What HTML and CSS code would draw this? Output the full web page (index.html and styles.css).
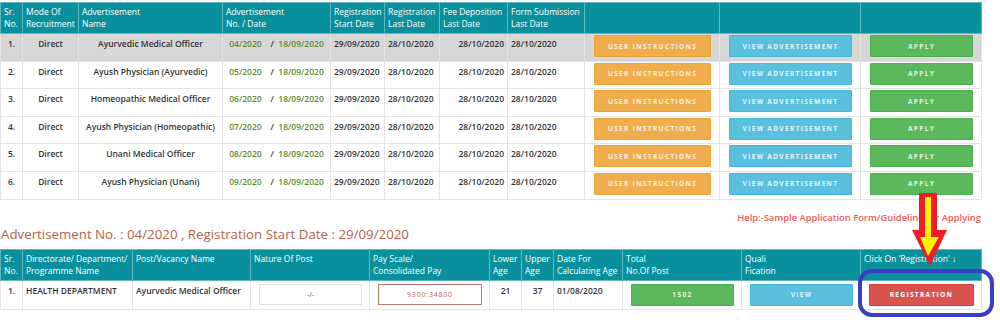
FILE: index.html
```html
<!DOCTYPE html>
<html lang="en">
<head>
    <meta charset="UTF-8">
    <meta name="viewport" content="width=device-width, initial-scale=1.0">
    <title>Advertisements</title>
    <link rel="stylesheet" href="styles.css">
</head>
<body>
    <div class="page">
        <table class="grid">
            <colgroup>
                <col style="width:22px"><col style="width:56px"><col style="width:144px"><col style="width:108px">
                <col style="width:54px"><col style="width:55px"><col style="width:68px"><col style="width:77px">
                <col style="width:135px"><col style="width:141px"><col style="width:121px">
            </colgroup>
            <thead>
                <tr>
                    <th>Sr.<br>No.</th>
                    <th>Mode Of<br>Recruitment</th>
                    <th>Advertisement<br>Name</th>
                    <th>Advertisement<br>No. / Date</th>
                    <th>Registration<br>Start Date</th>
                    <th>Registration<br>Last Date</th>
                    <th>Fee Deposition<br>Last Date</th>
                    <th>Form Submission<br>Last Date</th>
                    <th></th>
                    <th></th>
                    <th></th>
                </tr>
            </thead>
            <tbody>
                <tr class="active">
                    <td class="center">1.</td>
                    <td class="center">Direct</td>
                    <td class="center">Ayurvedic Medical Officer</td>
                    <td class="center"><span class="adv-no">04/2020</span>&nbsp;&nbsp;&nbsp; / &nbsp;<span class="adv-no">18/09/2020</span></td>
                    <td>29/09/2020</td>
                    <td>28/10/2020</td>
                    <td class="right">28/10/2020</td>
                    <td>28/10/2020</td>
                    <td class="action"><button class="btn btn-orange">User Instructions</button></td>
                    <td class="action"><button class="btn btn-blue">View Advertisement</button></td>
                    <td class="action"><button class="btn btn-green">Apply</button></td>
                </tr>
                <tr>
                    <td class="center">2.</td>
                    <td class="center">Direct</td>
                    <td class="center">Ayush Physician (Ayurvedic)</td>
                    <td class="center"><span class="adv-no">05/2020</span>&nbsp;&nbsp;&nbsp; / &nbsp;<span class="adv-no">18/09/2020</span></td>
                    <td>29/09/2020</td>
                    <td>28/10/2020</td>
                    <td class="right">28/10/2020</td>
                    <td>28/10/2020</td>
                    <td class="action"><button class="btn btn-orange">User Instructions</button></td>
                    <td class="action"><button class="btn btn-blue">View Advertisement</button></td>
                    <td class="action"><button class="btn btn-green">Apply</button></td>
                </tr>
                <tr>
                    <td class="center">3.</td>
                    <td class="center">Direct</td>
                    <td class="center">Homeopathic Medical Officer</td>
                    <td class="center"><span class="adv-no">06/2020</span>&nbsp;&nbsp;&nbsp; / &nbsp;<span class="adv-no">18/09/2020</span></td>
                    <td>29/09/2020</td>
                    <td>28/10/2020</td>
                    <td class="right">28/10/2020</td>
                    <td>28/10/2020</td>
                    <td class="action"><button class="btn btn-orange">User Instructions</button></td>
                    <td class="action"><button class="btn btn-blue">View Advertisement</button></td>
                    <td class="action"><button class="btn btn-green">Apply</button></td>
                </tr>
                <tr>
                    <td class="center">4.</td>
                    <td class="center">Direct</td>
                    <td class="center">Ayush Physician (Homeopathic)</td>
                    <td class="center"><span class="adv-no">07/2020</span>&nbsp;&nbsp;&nbsp; / &nbsp;<span class="adv-no">18/09/2020</span></td>
                    <td>29/09/2020</td>
                    <td>28/10/2020</td>
                    <td class="right">28/10/2020</td>
                    <td>28/10/2020</td>
                    <td class="action"><button class="btn btn-orange">User Instructions</button></td>
                    <td class="action"><button class="btn btn-blue">View Advertisement</button></td>
                    <td class="action"><button class="btn btn-green">Apply</button></td>
                </tr>
                <tr>
                    <td class="center">5.</td>
                    <td class="center">Direct</td>
                    <td class="center">Unani Medical Officer</td>
                    <td class="center"><span class="adv-no">08/2020</span>&nbsp;&nbsp;&nbsp; / &nbsp;<span class="adv-no">18/09/2020</span></td>
                    <td>29/09/2020</td>
                    <td>28/10/2020</td>
                    <td class="right">28/10/2020</td>
                    <td>28/10/2020</td>
                    <td class="action"><button class="btn btn-orange">User Instructions</button></td>
                    <td class="action"><button class="btn btn-blue">View Advertisement</button></td>
                    <td class="action"><button class="btn btn-green">Apply</button></td>
                </tr>
                <tr>
                    <td class="center">6.</td>
                    <td class="center">Direct</td>
                    <td class="center">Ayush Physician (Unani)</td>
                    <td class="center"><span class="adv-no">09/2020</span>&nbsp;&nbsp;&nbsp; / &nbsp;<span class="adv-no">18/09/2020</span></td>
                    <td>29/09/2020</td>
                    <td>28/10/2020</td>
                    <td class="right">28/10/2020</td>
                    <td>28/10/2020</td>
                    <td class="action"><button class="btn btn-orange">User Instructions</button></td>
                    <td class="action"><button class="btn btn-blue">View Advertisement</button></td>
                    <td class="action"><button class="btn btn-green">Apply</button></td>
                </tr>
            </tbody>
        </table>

        <p class="help">Help:-Sample Application Form/Guideline for Applying</p>
        <h2 class="title">Advertisement No. : 04/2020 , Registration Start Date : 29/09/2020</h2>

        <table class="grid posts">
            <colgroup>
                <col style="width:22px"><col style="width:110px"><col style="width:118px"><col style="width:119px">
                <col style="width:120px"><col style="width:32px"><col style="width:32px"><col style="width:69px">
                <col style="width:119px"><col style="width:119px"><col style="width:121px">
            </colgroup>
            <thead>
                <tr>
                    <th>Sr.<br>No.</th>
                    <th>Directorate/ Department/<br>Programme Name</th>
                    <th>Post/Vacancy Name</th>
                    <th>Nature Of Post</th>
                    <th>Pay Scale/<br>Consolidated Pay</th>
                    <th>Lower<br>Age</th>
                    <th>Upper<br>Age</th>
                    <th>Date For<br>Calculating Age</th>
                    <th>Total<br>No.Of Post</th>
                    <th>Quali<br>Fication</th>
                    <th>Click On 'Registration' &darr;</th>
                </tr>
            </thead>
            <tbody>
                <tr>
                    <td class="center">1.</td>
                    <td>HEALTH DEPARTMENT</td>
                    <td>Ayurvedic Medical Officer</td>
                    <td class="box-cell"><div class="box">-/-</div></td>
                    <td class="box-cell"><div class="box box-pay">9300:34800</div></td>
                    <td class="center">21</td>
                    <td class="center">37</td>
                    <td>01/08/2020</td>
                    <td class="box-cell"><button class="btn btn-green">1502</button></td>
                    <td class="box-cell"><button class="btn btn-blue">View</button></td>
                    <td class="box-cell"><button class="btn btn-red">Registration</button></td>
                </tr>
            </tbody>
        </table>

        <div class="footer-bar"></div>

        <svg class="callout" width="1000" height="325" viewBox="0 0 1000 325">
            <polygon points="919,193 937,193 937,230 947,230 930,266 912,230 919,230" fill="#ee1c24"/>
            <polygon points="925,197 931,197 931,237 939,237 928,256 920,237 925,237" fill="#fff200"/>
            <rect x="860" y="271" width="132" height="44" rx="12" ry="12" fill="none" stroke="#3b3dc4" stroke-width="4"/>
        </svg>
    </div>
</body>
</html>
```

FILE: styles.css
```css
* {
    margin: 0;
    padding: 0;
    box-sizing: border-box;
}
body {
    font-family: 'Open Sans', sans-serif;
    background: #fff;
    color: #333;
}
.page {
    position: relative;
    width: 1000px;
    height: 325px;
    padding-top: 2px;
    overflow: hidden;
}
.grid {
    width: 981px;
    table-layout: fixed;
    border-collapse: collapse;
    font-size: 8.5px;
}
.grid th {
    background: #0a8f9c;
    color: #fff;
    font-weight: 400;
    text-align: left;
    vertical-align: top;
    line-height: 12px;
    padding: 3px 3px;
    border: 1px solid #5fb6bf;
    height: 29px;
}
.grid td {
    font-weight: 600;
    line-height: 12px;
    padding: 4px 3px 3px;
    border: 1px solid #e4e4e4;
    vertical-align: top;
    height: 27.6px;
    white-space: nowrap;
}
.grid tr.active td {
    background: #d7d7d7;
}
.grid td.center {
    text-align: center;
}
.grid td.right {
    text-align: right;
}
.adv-no {
    color: #5e8a2c;
}
.grid td.action {
    padding: 1px 8px 3px 9px;
}
.btn {
    display: block;
    width: 100%;
    height: 22px;
    border: 1px solid transparent;
    border-radius: 1px;
    color: rgba(255, 255, 255, 0.85);
    font-family: 'Open Sans', sans-serif;
    font-size: 6.6px;
    font-weight: 700;
    letter-spacing: 1.3px;
    text-transform: uppercase;
    cursor: pointer;
}
.btn-orange {
    background: #f0ad4e;
    border-color: #eea236;
}
.btn-blue {
    background: #5bc0de;
    border-color: #46b8da;
}
.btn-green {
    background: #5cb85c;
    border-color: #4cae4c;
}
.btn-red {
    background: #d9534f;
    border-color: #d43f3a;
    color: #fff;
}
.help {
    width: 981px;
    margin-top: 12px;
    text-align: right;
    color: #f25b5b;
    font-size: 9.4px;
    font-weight: 600;
    line-height: 12px;
}
.title {
    margin-top: 1px;
    padding-left: 1px;
    color: #b6604a;
    font-size: 13.3px;
    font-weight: 400;
    line-height: 18px;
}
.posts {
    margin-top: 6px;
}
.posts td.box-cell {
    padding: 3px 7px 3px 8px;
}
.box {
    height: 21px;
    border: 1px solid #e2e2e2;
    text-align: center;
    line-height: 19px;
    font-weight: 400;
    font-size: 7px;
    color: #555;
}
.box-pay {
    border-color: #c27a6e;
    color: #b5625a;
    letter-spacing: 0.8px;
}
.footer-bar {
    margin-top: 16px;
    height: 10px;
    background: #efefef;
}
.callout {
    position: absolute;
    left: 0;
    top: 0;
    pointer-events: none;
}
```
